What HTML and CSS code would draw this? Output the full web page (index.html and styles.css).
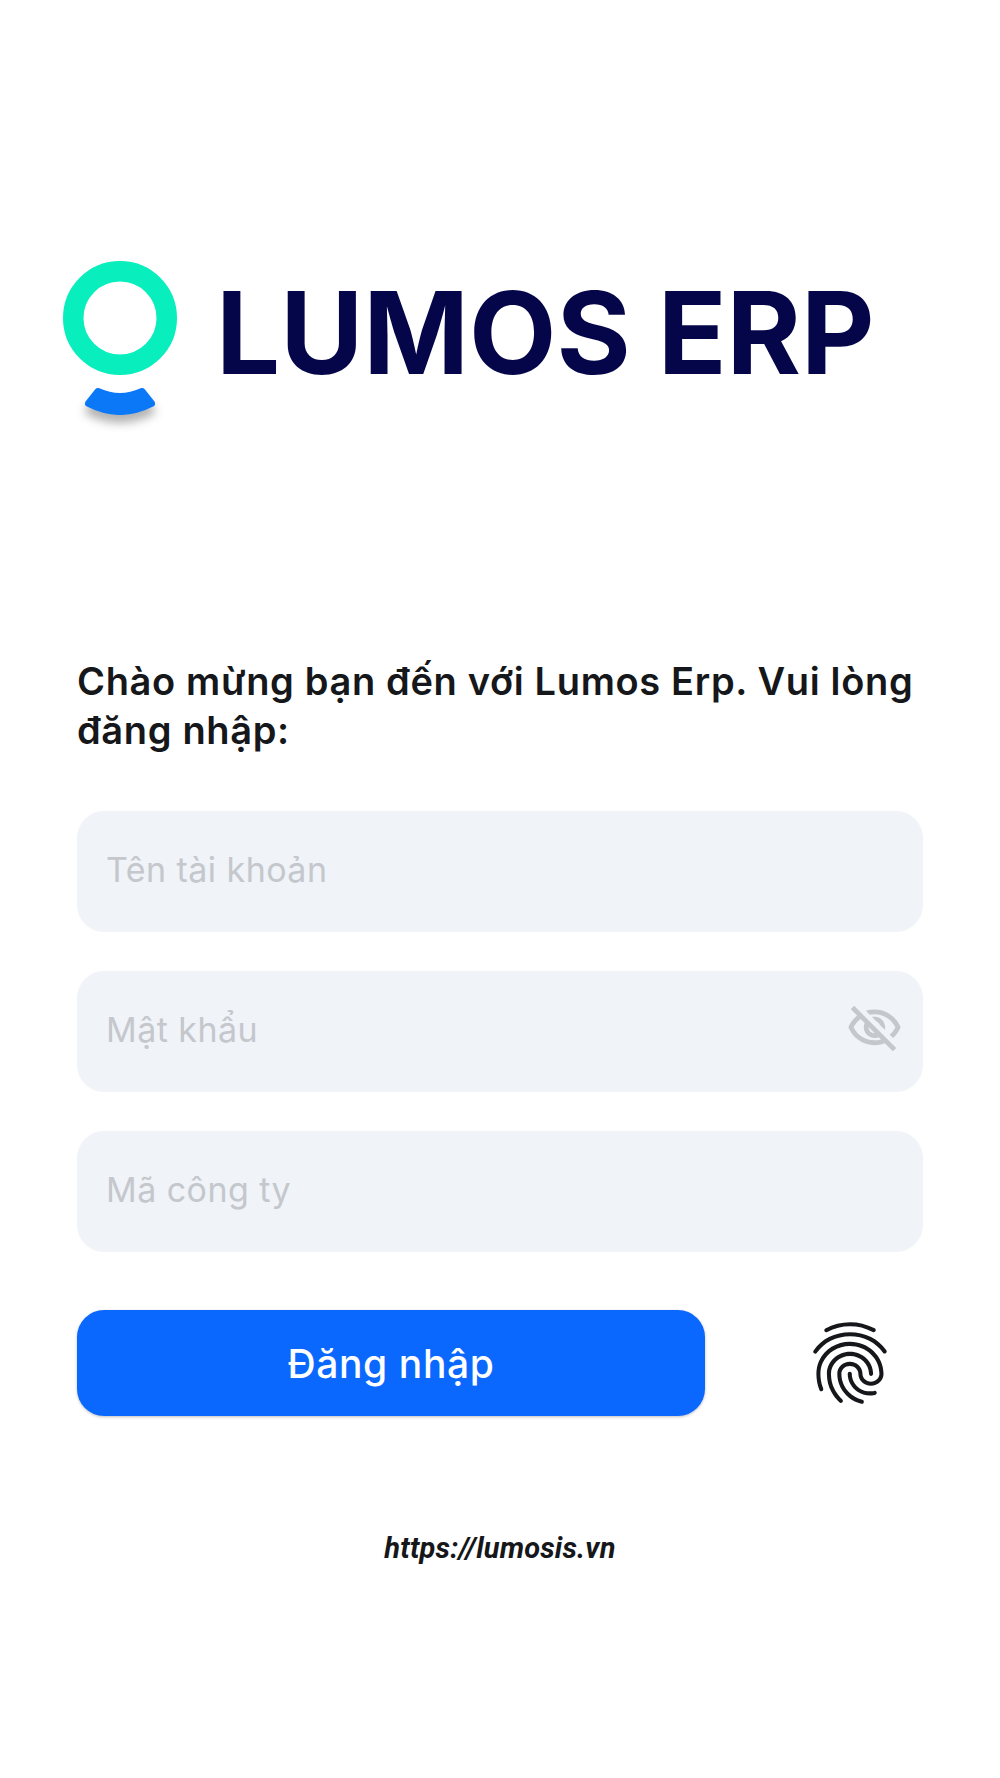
FILE: index.html
```html
<!DOCTYPE html>
<html lang="vi">
<head>
    <meta charset="UTF-8">
    <meta name="viewport" content="width=device-width, initial-scale=1.0">
    <title>Lumos ERP</title>
    <link rel="stylesheet" href="styles.css">
</head>
<body>
    <div class="page">
        <div class="brand">
            <svg class="brand-mark" viewBox="0 0 140 190" width="140" height="190">
                <circle cx="60" cy="63" r="46.75" fill="none" stroke="#08eebd" stroke-width="20.5"/>
                <path class="brand-base" d="M38 136.5 Q60 146.5 82 136.5 L91.5 148.5 Q60 164.5 28.5 148.5 Z" fill="#0a78f7" stroke="#0a78f7" stroke-width="7" stroke-linejoin="round"/>
            </svg>
            <span class="brand-name">LUMOS ERP</span>
        </div>

        <h2 class="welcome">Chào mừng bạn đến với Lumos Erp. Vui lòng đăng nhập:</h2>

        <form class="login-form">
            <div class="field">
                <input type="text" placeholder="Tên tài khoản">
            </div>
            <div class="field">
                <input type="password" placeholder="Mật khẩu">
                <svg class="eye-icon" viewBox="0 0 24 24" width="57" height="57" fill="#c4c7cc">
                    <path d="M12 6c3.79 0 7.17 2.13 8.82 5.5-.59 1.22-1.42 2.27-2.41 3.12l1.41 1.41c1.39-1.23 2.49-2.77 3.18-4.53C21.27 7.11 17 4 12 4c-1.27 0-2.49.2-3.64.57l1.65 1.65C10.66 6.09 11.32 6 12 6zm-1.07 1.14L13 9.21c.57.25 1.03.71 1.28 1.28l2.07 2.07c.08-.34.14-.7.14-1.07C16.5 9.01 14.48 7 12 7c-.37 0-.72.05-1.07.14zM2.01 3.87l2.68 2.68C3.06 7.83 1.77 9.53 1 11.5 2.73 15.89 7 19 12 19c1.52 0 2.98-.29 4.32-.82l3.42 3.42 1.41-1.41L3.42 2.45 2.01 3.87zm7.5 7.5l2.61 2.61c-.04.01-.08.02-.12.02-1.38 0-2.5-1.12-2.5-2.5 0-.05.01-.08.01-.13zm-3.4-3.4l1.75 1.75c-.23.55-.36 1.15-.36 1.78 0 2.48 2.02 4.5 4.5 4.5.63 0 1.23-.13 1.77-.36l.98.98c-.88.24-1.8.38-2.75.38-3.79 0-7.17-2.13-8.82-5.5.7-1.43 1.72-2.61 2.93-3.53z"/>
                </svg>
            </div>
            <div class="field">
                <input type="text" placeholder="Mã công ty">
            </div>

            <div class="actions">
                <button type="button" class="login-btn">Đăng nhập</button>
                <svg class="finger-icon" viewBox="0 0 24 24" width="98" height="98" fill="#15171a">
                    <path d="M17.81 4.47c-.08 0-.16-.02-.23-.06C15.66 3.42 14 3 12.01 3c-1.98 0-3.86.47-5.57 1.41-.24.13-.54.04-.68-.2-.13-.24-.04-.55.2-.68C7.82 2.52 9.86 2 12.01 2c2.13 0 3.99.47 6.03 1.52.25.13.34.43.21.67-.09.18-.26.28-.44.28zM3.5 9.72c-.1 0-.2-.03-.29-.09-.23-.16-.28-.47-.12-.7.99-1.4 2.25-2.5 3.75-3.27C9.98 4.04 14 4.03 17.15 5.65c1.5.77 2.76 1.86 3.75 3.25.16.22.11.54-.12.7-.23.16-.54.11-.7-.12-.9-1.26-2.04-2.25-3.39-2.94-2.87-1.47-6.54-1.47-9.4.01-1.36.7-2.5 1.7-3.4 2.96-.08.14-.23.21-.39.21zm6.25 12.07c-.13 0-.26-.05-.35-.15-.87-.87-1.34-1.43-2.01-2.64-.69-1.23-1.05-2.73-1.05-4.34 0-2.97 2.54-5.39 5.66-5.39s5.66 2.42 5.66 5.39c0 .28-.22.5-.5.5s-.5-.22-.5-.5c0-2.42-2.09-4.39-4.66-4.39-2.57 0-4.66 1.97-4.66 4.39 0 1.44.32 2.77.93 3.85.64 1.15 1.08 1.64 1.85 2.42.19.2.19.51 0 .71-.11.1-.24.15-.37.15zm7.17-1.85c-1.19 0-2.24-.3-3.1-.89-1.49-1.01-2.38-2.65-2.38-4.39 0-.28.22-.5.5-.5s.5.22.5.5c0 1.41.72 2.74 1.94 3.56.71.48 1.54.71 2.54.71.24 0 .64-.03 1.04-.1.27-.05.53.13.58.41.05.27-.13.53-.41.58-.57.11-1.07.12-1.21.12zM14.91 22c-.04 0-.09-.01-.13-.02-1.59-.44-2.63-1.03-3.72-2.1-1.4-1.39-2.17-3.24-2.17-5.22 0-1.62 1.38-2.94 3.08-2.94 1.7 0 3.08 1.32 3.08 2.94 0 1.07.93 1.94 2.08 1.94s2.08-.87 2.08-1.94c0-3.77-3.25-6.83-7.25-6.83-2.84 0-5.44 1.58-6.61 4.03-.39.81-.59 1.76-.59 2.8 0 .78.07 2.01.67 3.61.1.26-.03.55-.29.64-.26.1-.55-.04-.64-.29-.49-1.31-.73-2.61-.73-3.96 0-1.2.23-2.29.68-3.24 1.33-2.79 4.28-4.6 7.51-4.6 4.55 0 8.25 3.51 8.25 7.83 0 1.62-1.38 2.94-3.08 2.94s-3.08-1.32-3.08-2.94c0-1.07-.93-1.94-2.08-1.94s-2.08.87-2.08 1.94c0 1.71.66 3.31 1.87 4.51.95.94 1.86 1.46 3.27 1.85.27.07.42.35.35.61-.05.23-.26.38-.47.38z"/>
                </svg>
            </div>
        </form>

        <div class="site-link">https://lumosis.vn</div>
    </div>
</body>
</html>
```

FILE: styles.css
```css
* {
    box-sizing: border-box;
}
body {
    margin: 0;
    background-color: #fff;
    font-family: Inter, "Noto Sans", sans-serif;
}
.page {
    width: 1000px;
    height: 1778px;
    padding: 255px 77px 0;
    overflow: hidden;
}
.brand {
    display: flex;
    align-items: flex-start;
    height: 190px;
    margin-left: -17px;
    white-space: nowrap;
}
.brand-mark {
    flex-shrink: 0;
}
.brand-base {
    filter: drop-shadow(0 8px 5px rgba(0,0,0,0.3));
}
.brand-name {
    margin-left: 16px;
    margin-top: 8px;
    font-size: 113.5px;
    line-height: 140px;
    font-weight: 700;
    color: #05054a;
}
.welcome {
    margin: 212px 0 0;
    font-size: 38px;
    line-height: 49px;
    font-weight: 600;
    letter-spacing: 0.66px;
    color: #15171a;
}
.login-form {
    margin-top: 56px;
}
.field {
    position: relative;
    height: 121px;
    margin-bottom: 39px;
}
.field input {
    display: block;
    width: 100%;
    height: 100%;
    padding: 0 100px 5px 29px;
    border: none;
    border-radius: 27px;
    background-color: #f0f3f8;
    font-family: inherit;
    font-size: 34px;
    letter-spacing: 0.45px;
    outline: none;
}
.field input::placeholder {
    color: #c4c7cc;
    opacity: 1;
}
.eye-icon {
    position: absolute;
    right: 20px;
    top: 29px;
}
.actions {
    display: flex;
    align-items: center;
    margin-top: 58px;
}
.login-btn {
    width: 628px;
    height: 106px;
    border: none;
    border-radius: 27px;
    background-color: #0a68ff;
    box-shadow: 0 1px 3px rgba(0,0,0,0.25);
    color: #fff;
    font-family: inherit;
    font-size: 39px;
    font-weight: 500;
    letter-spacing: 0.6px;
}
.finger-icon {
    margin-left: 96px;
}
.site-link {
    margin-top: 112px;
    text-align: center;
    font-family: Roboto, sans-serif;
    font-size: 29px;
    font-weight: 700;
    font-style: italic;
    letter-spacing: 0.15px;
    line-height: 40px;
    color: #15171a;
}
```
